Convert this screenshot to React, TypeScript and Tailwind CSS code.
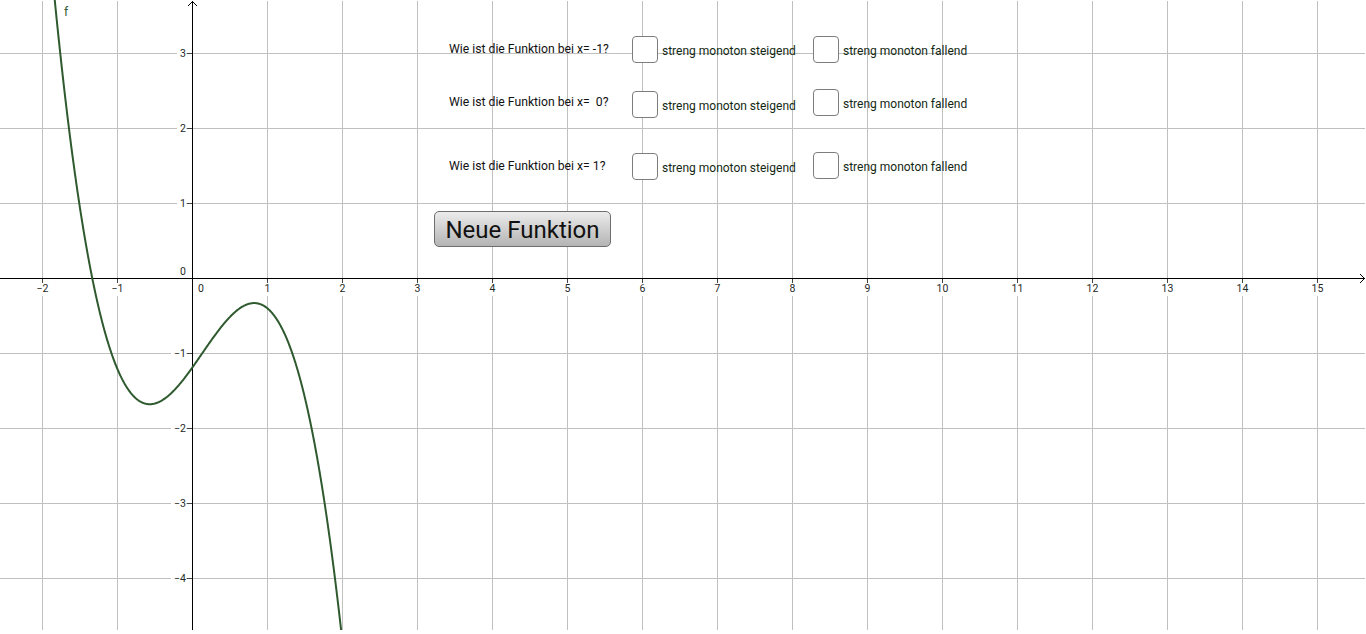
const X0 = 192;
const Y0 = 278;
const U = 75;
const W = 1366;
const H = 630;

// f(x) = -x^3 + 0.4x^2 + 1.4x - 1.2
const f = (x: number) => -x * x * x + 0.4 * x * x + 1.4 * x - 1.2;

const xTicks = Array.from({ length: 18 }, (_, i) => i - 2).filter((k) => k !== 0);
const yTicks = [3, 2, 1, -1, -2, -3, -4];

function curvePath() {
  const pts: string[] = [];
  for (let x = -1.95; x <= 2.06; x += 0.005) {
    const px = X0 + x * U;
    const py = Y0 - f(x) * U;
    pts.push(`${pts.length ? "L" : "M"}${px.toFixed(2)},${py.toFixed(2)}`);
  }
  return pts.join(" ");
}

function label(n: number) {
  return n < 0 ? `\u2212${-n}` : `${n}`;
}

function Plot() {
  return (
    <svg width={W} height={H} className="block" style={{ fontFamily: "Roboto, sans-serif" }}>
      {/* grid */}
      {xTicks.map((k) => (
        <line key={`gx${k}`} x1={X0 + k * U + 0.5} y1={1} x2={X0 + k * U + 0.5} y2={H} stroke="#c0c0c0" strokeWidth={1} />
      ))}
      {yTicks.map((k) => (
        <line key={`gy${k}`} x1={0} y1={Y0 - k * U + 0.5} x2={W - 1} y2={Y0 - k * U + 0.5} stroke="#c0c0c0" strokeWidth={1} />
      ))}

      {/* x labels */}
      {xTicks.map((k) => {
        const x = X0 + k * U + 0.5;
        const s = label(k);
        const w = s.length * 6 + 2;
        return (
          <g key={`lx${k}`}>
            <rect x={x - w / 2} y={283} width={w} height={13} fill="#fff" />
            <line x1={x} y1={278} x2={x} y2={283} stroke="#444" strokeWidth={1} />
            <text x={x} y={292} textAnchor="middle" fontSize={10.5} fill="#1f2a1f">
              {s}
            </text>
          </g>
        );
      })}
      <text x={201} y={292} textAnchor="middle" fontSize={10.5} fill="#1f2a1f">
        0
      </text>

      {/* y labels */}
      {yTicks.map((k) => {
        const y = Y0 - k * U + 0.5;
        const s = label(k);
        const w = s.length * 6 + 3;
        return (
          <g key={`ly${k}`}>
            <rect x={186 - w} y={y - 6} width={w} height={12} fill="#fff" />
            <line x1={187} y1={y} x2={192} y2={y} stroke="#444" strokeWidth={1} />
            <text x={186} y={y + 3.8} textAnchor="end" fontSize={10.5} fill="#1f2a1f">
              {s}
            </text>
          </g>
        );
      })}
      <text x={186} y={275} textAnchor="end" fontSize={10.5} fill="#1f2a1f">
        0
      </text>

      {/* axes */}
      <line x1={0} y1={Y0 + 0.5} x2={W - 1} y2={Y0 + 0.5} stroke="#000" strokeWidth={1} />
      <line x1={X0 + 0.5} y1={1} x2={X0 + 0.5} y2={H} stroke="#000" strokeWidth={1} />
      <path d={`M${W - 6},${Y0 - 4} L${W - 1.5},${Y0 + 0.5} L${W - 6},${Y0 + 5}`} fill="none" stroke="#000" strokeWidth={1} />
      <path d={`M${X0 - 4},6 L${X0 + 0.5},1.5 L${X0 + 5},6`} fill="none" stroke="#000" strokeWidth={1} />

      {/* function */}
      <path d={curvePath()} fill="none" stroke="#2f5a2f" strokeWidth={2} strokeLinejoin="round" />
      <text x={64} y={16} fontSize={12} fill="#2f5a2f">
        f
      </text>
    </svg>
  );
}

function Box() {
  return <span className="block w-[26px] h-[27px] shrink-0 rounded-[4px] border-[1.5px] border-[#7d7d7d] bg-white" />;
}

function Option({ text, top, width }: { text: string; top: string; width: string }) {
  return (
    <label className={`flex items-center gap-[4px] ${top} ${width}`}>
      <Box />
      <span className="pt-[2px] text-[12px] leading-[14px] text-[#132813] whitespace-nowrap">{text}</span>
    </label>
  );
}

export default function App() {
  return (
    <div className="relative w-[1366px] h-[634px] overflow-hidden bg-white font-['Roboto',sans-serif]">
      <Plot />

      <div className="absolute left-[434px] top-[36px] flex flex-col">
        <div className="flex items-start pl-[15px]">
          <p className="w-[183px] mt-[6px] text-[12.2px] leading-[14px] text-[#111] whitespace-pre">Wie ist die Funktion bei x= -1?</p>
          <Option text="streng monoton steigend" top="mt-[0px]" width="w-[181px]" />
          <Option text="streng monoton fallend" top="mt-0" width="w-[160px]" />
        </div>

        <div className="flex items-start pl-[15px] mt-[26px]">
          <p className="w-[183px] mt-[6px] text-[12.2px] leading-[14px] text-[#111] whitespace-pre">Wie ist die Funktion bei x=  0?</p>
          <Option text="streng monoton steigend" top="mt-[2px]" width="w-[181px]" />
          <Option text="streng monoton fallend" top="mt-0" width="w-[160px]" />
        </div>

        <div className="flex items-start pl-[15px] mt-[34px]">
          <p className="w-[183px] mt-[7px] text-[12.2px] leading-[14px] text-[#111] whitespace-pre">Wie ist die Funktion bei x= 1?</p>
          <Option text="streng monoton steigend" top="mt-[1px]" width="w-[181px]" />
          <Option text="streng monoton fallend" top="mt-0" width="w-[160px]" />
        </div>

        <button className="mt-[31px] w-[177px] h-[36px] pt-[2px] rounded-[5px] border border-[#6e6e6e] bg-gradient-to-b from-[#ececec] to-[#b4b4b4] text-[24px] leading-none text-[#111]">
          Neue Funktion
        </button>
      </div>
    </div>
  );
}
